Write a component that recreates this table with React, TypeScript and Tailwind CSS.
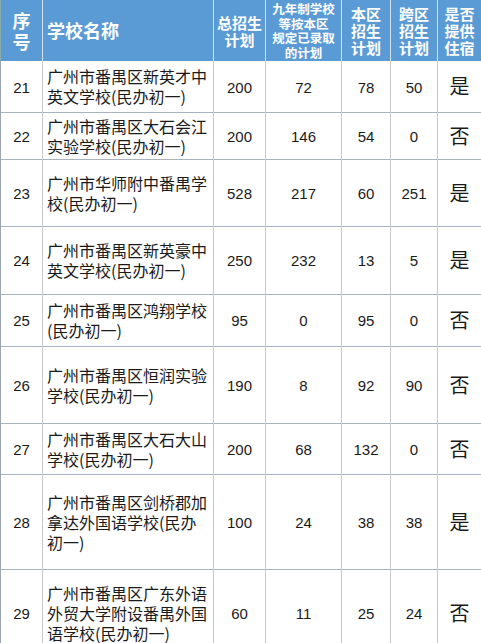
import React from 'react';

interface School {
  no: number;
  name: string[];
  total: number;
  nine: number;
  local: number;
  cross: number;
  board: string;
  h: string;
}

const SCHOOLS: School[] = [
  { no: 21, name: ['广州市番禺区新英才中', '英文学校(民办初一)'], total: 200, nine: 72, local: 78, cross: 50, board: '是', h: 'h-[51px]' },
  { no: 22, name: ['广州市番禺区大石会江', '实验学校(民办初一)'], total: 200, nine: 146, local: 54, cross: 0, board: '否', h: 'h-[47px]' },
  { no: 23, name: ['广州市华师附中番禺学', '校(民办初一)'], total: 528, nine: 217, local: 60, cross: 251, board: '是', h: 'h-[67px]' },
  { no: 24, name: ['广州市番禺区新英豪中', '英文学校(民办初一)'], total: 250, nine: 232, local: 13, cross: 5, board: '是', h: 'h-[68px]' },
  { no: 25, name: ['广州市番禺区鸿翔学校', '(民办初一)'], total: 95, nine: 0, local: 95, cross: 0, board: '否', h: 'h-[52px]' },
  { no: 26, name: ['广州市番禺区恒润实验', '学校(民办初一)'], total: 190, nine: 8, local: 92, cross: 90, board: '否', h: 'h-[77px]' },
  { no: 27, name: ['广州市番禺区大石大山', '学校(民办初一)'], total: 200, nine: 68, local: 132, cross: 0, board: '否', h: 'h-[51px]' },
  { no: 28, name: ['广州市番禺区剑桥郡加', '拿达外国语学校(民办', '初一)'], total: 100, nine: 24, local: 38, cross: 38, board: '是', h: 'h-[95px]' },
  { no: 29, name: ['广州市番禺区广东外语', '外贸大学附设番禺外国', '语学校(民办初一)'], total: 60, nine: 11, local: 25, cross: 24, board: '否', h: 'h-[88px]' },
];

// ─── Header cell ─────────────────────────────────────────────────────────────

function Head({ lines, cls }: { lines: string[]; cls: string }) {
  return (
    <th className="border-x border-[#cfe1f2] first:border-l-[#8aa] last:border-r-[#8aa] p-0 align-middle font-bold text-white">
      <div className={cls}>
        {lines.map((l, i) => (
          <div key={i}>{l}</div>
        ))}
      </div>
    </th>
  );
}

export default function App() {
  const cjk = { fontFamily: '"Noto Sans CJK SC", "Noto Sans", sans-serif' };
  const num = { fontFamily: '"Liberation Sans", "Noto Sans CJK SC", sans-serif' };

  return (
    <div className="w-[481px] h-[643px] overflow-hidden bg-white" style={cjk}>
      <table className="w-[481px] table-fixed border-collapse">
        <colgroup>
          <col className="w-[42px]" />
          <col className="w-[171px]" />
          <col className="w-[52px]" />
          <col className="w-[76px]" />
          <col className="w-[49px]" />
          <col className="w-[47px]" />
          <col className="w-[44px]" />
        </colgroup>
        <thead>
          <tr className="h-[61px] bg-[#5b9bd5]">
            <Head lines={['序', '号']} cls="text-[18px] leading-[21px] text-center" />
            <Head lines={['学校名称']} cls="text-[18px] leading-[21px] text-left pl-[4px]" />
            <Head lines={['总招生', '计划']} cls="text-[15px] leading-[17px] text-center whitespace-nowrap" />
            <th className="border-x border-[#cfe1f2] p-0 align-top font-bold text-white">
              <div className="h-[61px] overflow-hidden pt-[2px] text-[12.5px] leading-[14.5px] text-center whitespace-nowrap">
                <div>九年制学校</div>
                <div>等按本区</div>
                <div>规定已录取</div>
                <div>的计划</div>
              </div>
            </th>
            <Head lines={['本区', '招生', '计划']} cls="text-[15px] leading-[17px] text-center" />
            <Head lines={['跨区', '招生', '计划']} cls="text-[15px] leading-[17px] text-center" />
            <Head lines={['是否', '提供', '住宿']} cls="text-[15px] leading-[17px] text-center" />
          </tr>
        </thead>
        <tbody className="text-[#1a1a1a]">
          {SCHOOLS.map((s) => (
            <tr key={s.no} className={`${s.h} border-b border-[#a9b3bd]`}>
              <td className="border-l border-l-[#9aa6b2] border-r border-r-[#c9c9c9] p-0 pt-[3px] text-center text-[15px]" style={num}>
                {s.no}
              </td>
              <td className="border-r border-[#c9c9c9] p-0 pl-[4px] text-[16px] leading-[20px] whitespace-nowrap">
                {s.name.map((l, i) => (
                  <div key={i}>{l}</div>
                ))}
              </td>
              <td className="border-r border-[#c9c9c9] p-0 pt-[3px] text-center text-[15px]" style={num}>{s.total}</td>
              <td className="border-r border-[#c9c9c9] p-0 pt-[3px] text-center text-[15px]" style={num}>{s.nine}</td>
              <td className="border-r border-[#c9c9c9] p-0 pt-[3px] text-center text-[15px]" style={num}>{s.local}</td>
              <td className="border-r border-[#c9c9c9] p-0 pt-[3px] text-center text-[15px]" style={num}>{s.cross}</td>
              <td className="border-r border-r-[#9aa6b2] p-0 text-center text-[20px]">{s.board}</td>
            </tr>
          ))}
        </tbody>
      </table>
    </div>
  );
}
